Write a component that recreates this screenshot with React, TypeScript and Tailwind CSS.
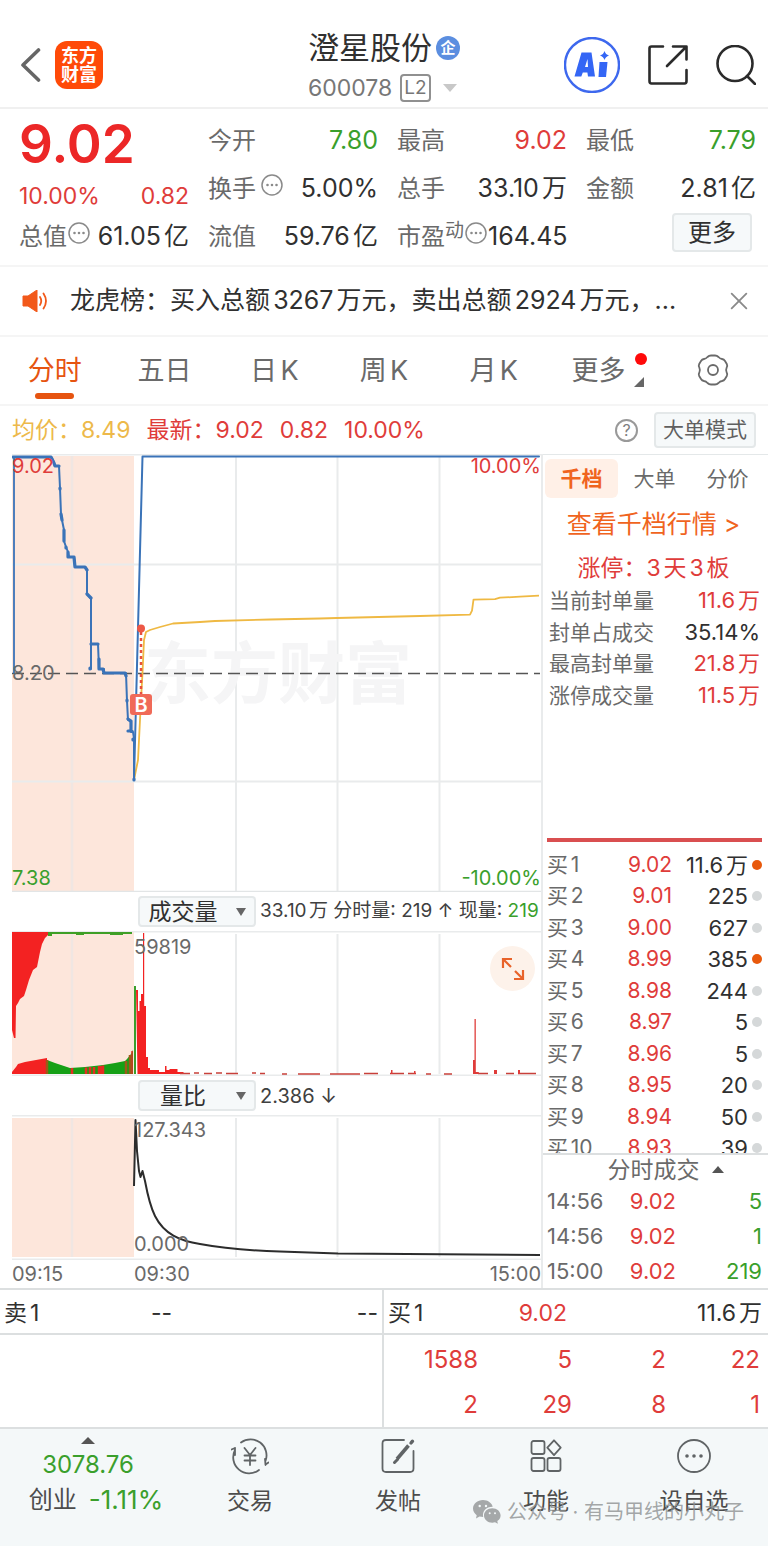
import React from 'react';
import clsx from 'clsx';
import { X } from 'lucide-react';

const RED = 'text-[#df3c3a]';
const GREEN = 'text-[#3a9f2c]';

const periods = ['分时', '五日', '日K', '周K', '月K'];

const limitStats = [
  { label: '当前封单量', value: '11.6万', red: true },
  { label: '封单占成交', value: '35.14%', red: false },
  { label: '最高封单量', value: '21.8万', red: true },
  { label: '涨停成交量', value: '11.5万', red: true },
];

const bids = [
  { price: '9.02', volume: '11.6万', active: true },
  { price: '9.01', volume: '225', active: false },
  { price: '9.00', volume: '627', active: false },
  { price: '8.99', volume: '385', active: true },
  { price: '8.98', volume: '244', active: false },
  { price: '8.97', volume: '5', active: false },
  { price: '8.96', volume: '5', active: false },
  { price: '8.95', volume: '20', active: false },
  { price: '8.94', volume: '50', active: false },
  { price: '8.93', volume: '39', active: false },
];

const trades = [
  { time: '14:56', price: '9.02', volume: '5' },
  { time: '14:56', price: '9.02', volume: '1' },
  { time: '15:00', price: '9.02', volume: '219' },
];

const queue = ['1588', '5', '2', '22', '2', '29', '8', '1'];

const MoreDots: React.FC = () => (
  <svg viewBox="0 0 24 24" className="h-6 w-6 shrink-0 self-start" fill="none" stroke="#8a8a8a" strokeWidth="1.5">
    <circle cx="12" cy="12" r="10" />
    <path d="M7.5 12h.01M12 12h.01M16.5 12h.01" strokeWidth="2.6" strokeLinecap="round" />
  </svg>
);

const Header: React.FC = () => (
  <header className="grid grid-cols-[1fr_auto_1fr] items-center border-b-2 border-[#f0f0f0] px-3 pt-[26px] pb-[3px]">
    <div className="flex items-center gap-3.5 pl-2">
      <button aria-label="返回">
        <svg viewBox="0 0 21 36" className="h-9 w-[21px]" fill="none" stroke="#666" strokeWidth="3.6" strokeLinecap="round" strokeLinejoin="round">
          <path d="M18.500 3 3 18l15.500 15" />
        </svg>
      </button>
      <div className="grid h-12 w-12 place-content-center rounded-xl bg-[#ff4a08] text-center text-[18px] leading-[19px] font-bold text-white">
        <span>东方</span>
        <span>财富</span>
      </div>
    </div>

    <div className="pt-0.5">
      <div className="flex items-center gap-1">
        <h1 className="text-[31px] leading-10 text-[#303030]">澄星股份</h1>
        <span className="grid h-6 w-6 place-content-center rounded-full bg-[#5b8ee0] text-[15px] font-bold text-white">企</span>
      </div>
      <div className="flex h-9 items-center gap-2 pt-1 text-[#777]">
        <span className="text-[23px]">600078</span>
        <span className="rounded-sm border-2 border-[#909090] px-0.5 text-[19px] leading-6">L2</span>
        <svg viewBox="0 0 14 8" className="ml-1 h-2 w-3.5" fill="#c8c8c8">
          <path d="M0 0h14L7 8z" />
        </svg>
      </div>
    </div>

    <div className="flex items-center justify-end gap-7">
      <button aria-label="AI助手">
        <svg viewBox="0 0 56 56" className="h-14 w-14">
          <circle cx="28" cy="28" r="27" fill="none" stroke="#3d68ee" strokeWidth="2.4" />
          <path d="M17.500 15.500h10l3.500 24h-7l-.6-4h-4.600l-1.500 4H10.500zM23.500 22l-2.500 8h3z" fill="#3466f5" fillRule="evenodd" />
          <path d="M35.500 25h8l-1.500 15h-7.500z" fill="#3466f5" />
          <path d="M40.500 14q1 3.500 4.500 4.500-3.500 1-4.500 4.500-1-3.500-4.500-4.500 3.500-1 4.500-4.500z" fill="#3466f5" />
        </svg>
      </button>
      <button aria-label="分享">
        <svg viewBox="0 0 40 40" className="h-10 w-10" fill="none" stroke="#2b2b2b" strokeWidth="2.6" strokeLinecap="round" strokeLinejoin="round">
          <path d="M15 1.500H3.500Q1.500 1.500 1.500 3.500v32.500q0 2.500 2 2.500h33q2 0 2-2.500V25M25 1.500h13.500v13M38 2 19 21" />
        </svg>
      </button>
      <button aria-label="搜索">
        <svg viewBox="0 0 40 40" className="h-10 w-10" fill="none" stroke="#2b2b2b" strokeWidth="2.6" strokeLinecap="round">
          <circle cx="19" cy="18.500" r="17.500" />
          <path d="m31 31 8 8" />
        </svg>
      </button>
    </div>
  </header>
);

interface QuoteItemProps {
  label: React.ReactNode;
  value: string;
  color?: string;
}

const QuoteItem: React.FC<QuoteItemProps> = ({ label, value, color = 'text-[#303030]' }) => (
  <div className="flex h-12 items-center justify-between whitespace-nowrap">
    <dt className="flex h-8 items-center text-2xl text-[#6a6a6a]">{label}</dt>
    <dd className={color}>{value}</dd>
  </div>
);

const Quote: React.FC = () => (
  <section className="grid grid-cols-4 gap-x-[19px] border-b-2 border-[#f5f5f5] pt-2 pr-3 pb-1 pl-[19px] text-[25px]">
    <dl>
      <div className="flex h-24 flex-col">
        <dd className="text-[53px] leading-[54px] font-semibold text-[#ec2727]">9.02</dd>
        <dd className={clsx('flex items-center justify-between pt-2 text-[23px]', RED)}>
          <span>10.00%</span>
          <span>0.82</span>
        </dd>
      </div>
      <QuoteItem label={<>总值<MoreDots /></>} value="61.05亿" />
    </dl>
    <dl>
      <QuoteItem label="今开" value="7.80" color={GREEN} />
      <QuoteItem label={<span className="flex gap-1">换手<MoreDots /></span>} value="5.00%" />
      <QuoteItem label="流值" value="59.76亿" />
    </dl>
    <dl>
      <QuoteItem label="最高" value="9.02" color={RED} />
      <QuoteItem label="总手" value="33.10万" />
      <QuoteItem label={<>市盈<small className="self-start text-[19px] leading-5">动</small><MoreDots /></>} value="164.45" />
    </dl>
    <div>
      <dl>
        <QuoteItem label="最低" value="7.79" color={GREEN} />
        <QuoteItem label="金额" value="2.81亿" />
      </dl>
      <div className="flex justify-end pr-1">
        <button className="h-[39px] w-20 rounded-sm border-2 border-[#e4e8e9] bg-[#f6f9fa] text-2xl leading-8 text-[#303030]">更多</button>
      </div>
    </div>
  </section>
);

const News: React.FC = () => (
  <section className="flex h-[70px] items-center border-b-2 border-[#f5f5f5] pr-[18px] pl-[22px] text-[#303030]">
    <svg viewBox="0 0 26 22" className="h-[22px] w-[26px] shrink-0">
      <path d="M1 6h5L15 0v22L6 16H1z" fill="#f2591a" stroke="#f2591a" strokeLinejoin="round" />
      <path d="M18 7q2.500 4 0 8M21.500 3.500q5 7.500 0 15" fill="none" stroke="#f2591a" strokeWidth="1.8" strokeLinecap="round" />
    </svg>
    <a href="#news" className="ml-[22px] min-w-0 truncate text-[25px]">龙虎榜：买入总额3267万元，卖出总额2924万元，...</a>
    <button aria-label="关闭" className="ml-auto text-[#8a8a8a]">
      <X className="h-[22px] w-[22px]" viewBox="3 3 18 18" strokeWidth={1.5} />
    </button>
  </section>
);

const PeriodTabs: React.FC = () => (
  <nav className="grid h-[69px] grid-cols-7 border-b-2 border-[#f5f5f5] text-[27px] text-[#6a6a6a]">
    {periods.map((name, i) => (
      <button key={name} className={clsx('flex flex-col items-center pt-3.5', i === 0 && 'text-[#e65410]')}>
        <span className="leading-10">{name}</span>
        {i === 0 && <span className="mt-0.5 h-1.5 w-[39px] rounded-sm bg-[#e65410]" />}
      </button>
    ))}
    <button className="flex items-start justify-center pt-3.5 pr-2.5">
      <span className="relative leading-10">
        更多
        <span className="absolute top-0.5 -right-[22px] h-3 w-3 rounded-full bg-[#ff0a0a]" />
        <svg viewBox="0 0 9 9" className="absolute right-[-19px] bottom-1 h-2.5 w-2.5" fill="#666">
          <path d="M9 0v9H0z" />
        </svg>
      </span>
    </button>
    <button aria-label="设置" className="flex justify-center pt-[17px]">
      <svg viewBox="0 0 32 32" className="h-8 w-8" fill="none" stroke="#6a6a6a" strokeWidth="1.8" strokeLinejoin="round">
        <path d="M10.500 3Q12 1.500 14 1.500h4Q20 1.500 21.500 3 23 4.800 25 5q2 .3 3 2l1.800 3q1 2-.2 3.800Q28.600 16 29.600 18.200q1.200 1.800.2 3.800L28 25q-1 1.700-3 2-2 .2-3.500 2Q20 30.500 18 30.500h-4q-2 0-3.500-1.500Q9 27.200 7 27q-2-.3-3-2l-1.800-3q-1-2 .2-3.800Q3.400 16 2.400 13.800 1.200 12 2.200 10L4 7q1-1.700 3-2 2-.2 3.500-2z" />
        <circle cx="16" cy="16" r="5" />
      </svg>
    </button>
  </nav>
);

const PriceBar: React.FC = () => (
  <section className="flex h-12 items-center px-3 text-[23px]">
    <span className="text-[#edb94a]">均价：8.49</span>
    <span className={clsx('ml-4 flex gap-4', RED)}>
      <span>最新：9.02</span>
      <span>0.82</span>
      <span>10.00%</span>
    </span>
    <button aria-label="帮助" className="ml-auto grid h-[23px] w-[23px] place-content-center rounded-full border-2 border-[#999] text-base text-[#808080]">?</button>
    <button className="ml-4 h-9 rounded-sm border-2 border-[#e4e8e9] bg-[#f6f9fa] px-[7px] text-[21px] leading-7 text-[#606060]">大单模式</button>
  </section>
);

const AuctionShade: React.FC<{ top: number; height: number }> = ({ top, height }) => (
  <>
    <rect x="0" y={top} width="122" height={height} fill="#fde6db" />
    <path d={`M60 ${top}v${height}`} stroke="#f0e6e2" strokeWidth="2.500" />
  </>
);

const PriceChart: React.FC = () => (
  <div className="relative text-xl leading-5">
    <svg viewBox="0 0 529 438" className="block w-full">
      <AuctionShade top={2} height={435} />
      <g stroke="#e9ebec" strokeWidth="2" fill="none">
        <path d="M0 .5h529M0 110.500h529M0 327.500h529" />
        <path d="M224 2v435M325.500 2v435M427.500 2v435" />
      </g>
      <text x="266" y="244" textAnchor="middle" fontSize="67" fontWeight="700" fill="#f5f5f6">东方财富</text>
      <path d="M0 219.500h528" stroke="#555" strokeWidth="1.300" strokeDasharray="12 6" />
      <path
        d="M122 326l4-20 3-60 1.500-27 1.500-33 2-8 4-2 10-3 13-3.500 27-1.500 15-1 55-1.500 50-1 17-.5 83-2 50-1.300 2-4 1.500-11 21.500-.500 5-1.500 20-1 19-1"
        fill="none"
        stroke="#efb943"
        strokeWidth="1.800"
        strokeLinejoin="round"
      />
      <g fill="none" stroke="#3a73b8" strokeLinejoin="round" strokeLinecap="round">
        <path d="M2 219V3" strokeWidth="1.800" />
        <path
          d="M1 3H39L41 6 43 12H47L48 34 49 60 50 66 52 76V87L54 93 56 98 57 103H62L63 113H73L75 116V140L79 145V215V190H86L87 215H92V219H114L115 247 116 266 119 268V278H121L122 284V326"
          strokeWidth="2"
        />
        <path
          d="M1 3H39L42 9 43 12H47M48 34v1M49 60l1 6M52 76v11M54 93v1M56 98v5h6l1 10h10l2 3M75 140l4 4M78 214v1M79 190h7M87 205v10h4l1 4h21l1 3M115 246v1M116 265l3 2v10h-3h4M121 285v1M122 325v1"
          strokeWidth="3.200"
        />
        <path d="M122 326 130.500 2.500H527" strokeWidth="2" />
      </g>
      <path d="M129 178v64" stroke="#e8503e" strokeWidth="2.500" strokeDasharray="3 3" />
      <circle cx="129" cy="174.500" r="4" fill="#ed5846" />
      <rect x="118" y="240" width="22" height="21" rx="3" fill="#f06a58" />
      <text x="129" y="258" textAnchor="middle" fontSize="20" fontWeight="600" fill="#fff">B</text>
      <path d="M0 437.500h529" stroke="#e2e5e6" strokeWidth="1.500" />
    </svg>
    <span className={clsx('absolute top-0.5 left-0', RED)}>9.02</span>
    <span className={clsx('absolute top-0.5 right-0', RED)}>10.00%</span>
    <span className="absolute top-1/2 left-0 -translate-y-1/2 text-[#6a6a6a]">8.20</span>
    <span className={clsx('absolute bottom-1 left-0', GREEN)}>7.38</span>
    <span className={clsx('absolute right-0 bottom-1', GREEN)}>-10.00%</span>
  </div>
);

interface IndicatorBarProps {
  options: string[];
  children: React.ReactNode;
}

const IndicatorBar: React.FC<IndicatorBarProps> = ({ options, children }) => (
  <div className="flex h-[39px] items-center gap-1 pl-[126px] text-[#404040]">
    <div className="relative shrink-0">
      <select
        aria-label="指标"
        className="h-[31px] w-[118px] appearance-none rounded-sm border-2 border-[#e4e8e9] bg-[#f6f9fa] pr-7 text-center text-[23px] leading-6 text-[#303030] [text-align-last:center]"
      >
        {options.map((name) => (
          <option key={name}>{name}</option>
        ))}
      </select>
      <svg viewBox="0 0 10 8" className="pointer-events-none absolute top-3 right-2.5 h-2 w-2.5" fill="#666">
        <path d="M0 0h10L5 8z" />
      </svg>
    </div>
    {children}
  </div>
);

const VolumeChart: React.FC = () => (
  <div className="relative text-xl leading-5">
    <svg viewBox="0 0 529 145" className="block w-full">
      <AuctionShade top={1} height={142} />
      <path d="M224 3v140M325.500 3v140M427.500 3v140M0 .5h529M0 144.500h529" stroke="#e9ebec" strokeWidth="2" />
      <path d="M0 1h36v3l-3 3-3 6-2 8-2 10-1 5-4 3-2 5-2 5-3 10-2 6-4 3-2 4-2 3-.5 32H2L0 99z" fill="#f32222" />
      <path d="M36 1h84v2h-9v1H98V3H72v1h-8V3H40v2h-4z" fill="#3f9f26" />
      <path d="M0 143v-2l4-5 2-3 7-2 11-2 11-2v16z" fill="#f32222" />
      <path d="M35 129l8 3 15 5 15-1 18-2 12-2 10-2 2-2 4-5 2-4v24H35z" fill="#16a016" />
      <path d="M60 137v6M74 136.500v6.500M78 136v7M82 136v7M87 135v8M89 135v8M91 134.500v8.500" stroke="#e52d22" strokeWidth="2.500" />
      <path d="M35 129v14M114 130v13M118 124v19" stroke="#9c5a18" strokeWidth="2.500" />
      <path d="M120 120v23" stroke="#e52d22" strokeWidth="1.500" />
      <path d="M123 55v88" stroke="#3a9f2c" strokeWidth="2" />
      <path d="M124 59h2v21h1.500V70h1.500v-7h2V2h1.200v73h1.800v51h2v11h2v2h9v2h6v-6h1.500v4h3v-1h8v3h6v2h-46z" fill="#f32222" />
      <path
        d="M168 142.500h10M182 142h5M192 142.500h8M204 142h6M214 142.500h12M240 142h4M248 142.500h5M270 143h5M286 143h22M318 143h30M352 142.500h14M378 142.500h14M396 142.500h8M414 143h5M432 143h8M466 142.500h10M494 142.500h8M506 142.500h18"
        stroke="#c8403a"
        strokeWidth="1.500"
      />
      <path d="M461 129h1.500V88h1.300v53h3v2H461zM482 139h3v4h-3zM506 139h2v4h-2zM379 139h1.500v4H379zM402 140h1.500v3H402z" fill="#df3c3a" />
    </svg>
    <span className="absolute top-1.5 left-[122px] text-[#6a6a6a]">59819</span>
    <button aria-label="全屏" className="absolute top-[15px] right-[6px] grid h-[45px] w-[45px] place-content-center rounded-full bg-[#fdf2ea]">
      <svg viewBox="0 0 24 24" className="h-6 w-6" fill="none" stroke="#e8632a" strokeWidth="2.200">
        <path d="M2 11V2h9M2 2l8 8M22 13v9h-9M22 22l-8-8" />
      </svg>
    </button>
  </div>
);

const RatioChart: React.FC = () => (
  <div className="relative text-xl leading-5 text-[#6a6a6a]">
    <svg viewBox="0 0 529 145" className="block w-full">
      <AuctionShade top={3} height={139} />
      <path d="M224 3v139M325.500 3v139M427.500 3v139M0 .5h529M0 144.500h529" stroke="#e9ebec" strokeWidth="2" />
      <path
        d="M122 71 123.500 5 125 36 127 56 128.500 62 130.500 56 133 66C136 82 139 93 143 101C152 119 168 126 188 129C212 133.500 238 135.500 268 136.500L326 138.500 528 140"
        fill="none"
        stroke="#2c2c2c"
        strokeWidth="2"
        strokeLinejoin="round"
      />
    </svg>
    <span className="absolute top-[5px] left-[122px]">127.343</span>
    <span className="absolute bottom-1.5 left-[122px]">0.000</span>
  </div>
);

const Charts: React.FC = () => (
  <div className="pl-3">
    <PriceChart />
    <IndicatorBar options={['成交量', '量比']}>
      <span className="text-[19px] whitespace-pre">
        33.10万 分时量: 219 ↑ 现量: <span className={GREEN}>219</span>
      </span>
    </IndicatorBar>
    <VolumeChart />
    <IndicatorBar options={['量比', '成交量']}>
      <span className="text-xl">2.386 ↓</span>
    </IndicatorBar>
    <RatioChart />
    <div className="flex h-7 items-center text-xl text-[#6a6a6a]">
      <span className="w-[122px]">09:15</span>
      <span>09:30</span>
      <span className="ml-auto">15:00</span>
    </div>
  </div>
);

const OrderBook: React.FC = () => (
  <aside className="flex flex-col border-l-2 border-[#e9ebec] text-[21px]">
    <div className="grid grid-cols-3 border-t border-[#e4e8e9] pt-1 pr-1 pl-0.5 text-[#6a6a6a]">
      <button className="h-[39px] rounded-md bg-[#fff0e7] font-bold text-[#f0641e]">千档</button>
      <button>大单</button>
      <button>分价</button>
    </div>
    <a href="#depth" className="pt-2 pr-1 text-center text-[25px] leading-[37px] text-[#f0641e]">查看千档行情 &gt;</a>
    <p className={clsx('pt-2 pr-1 text-center text-[23px] leading-[34px]', RED)}>涨停：3天3板</p>
    <dl className="grid h-[126px] grid-rows-4 pr-2 pl-1.5">
      {limitStats.map((item) => (
        <div key={item.label} className="flex items-center justify-between">
          <dt className="text-[#6a6a6a]">{item.label}</dt>
          <dd className={clsx('text-[22px]', item.red ? RED : 'text-[#303030]')}>{item.value}</dd>
        </div>
      ))}
    </dl>

    <div className="mt-[127px] mr-1.5 ml-1 h-1 bg-[#d94f50]" />
    <div className="mt-[7px] h-[304px] overflow-hidden">
      <table className="h-[315px] w-full table-fixed leading-7">
        <tbody>
          {bids.map((bid, i) => (
            <tr key={bid.price}>
              <td className="w-[56px] p-0 pl-1 text-[#6a6a6a]">买{i + 1}</td>
              <td className={clsx('w-[73px] p-0 text-right', RED)}>{bid.price}</td>
              <td className="p-0 text-right text-[22px] text-[#303030]">{bid.volume}</td>
              <td className="w-5 p-0 pl-1">
                <span className={clsx('block h-2.5 w-2.5 rounded-full', bid.active ? 'bg-[#e8590c]' : 'bg-[#d5d8d9]')} />
              </td>
            </tr>
          ))}
        </tbody>
      </table>
    </div>

    <button className="flex h-[31px] items-center justify-center gap-3 border-t-2 border-[#dcdfe0] pl-5 text-[23px] leading-7 text-[#6a6a6a]">
      分时成交
      <svg viewBox="0 0 12 7" className="h-[7px] w-3" fill="#555">
        <path d="M0 7h12L6 0z" />
      </svg>
    </button>
    <table className="h-[104px] w-full table-fixed text-[22px] leading-7">
      <tbody>
        {trades.map((trade, i) => (
          <tr key={i}>
            <td className="w-[66px] p-0 pl-1 text-[#6a6a6a]">{trade.time}</td>
            <td className={clsx('w-[67px] p-0 text-right', RED)}>{trade.price}</td>
            <td className={clsx('p-0 pr-1.5 text-right', GREEN)}>{trade.volume}</td>
          </tr>
        ))}
      </tbody>
    </table>
  </aside>
);

const Depth: React.FC = () => (
  <section className="grid grid-cols-2 border-y-2 border-[#dcdfe0] text-[23px] text-[#303030]">
    <div className="border-r-2 border-[#dcdfe0]">
      <div className="grid h-[45px] grid-cols-[1fr_80px_1fr] items-center border-b-2 border-[#dcdfe0] px-1 pt-1">
        <span>卖1</span>
        <span>--</span>
        <span className="text-right">--</span>
      </div>
    </div>
    <div>
      <div className="grid h-[45px] grid-cols-3 items-center border-b-2 border-[#dcdfe0] pt-1 pr-1.5 pl-1">
        <span>买1</span>
        <span className={clsx('pl-1.5', RED)}>9.02</span>
        <span className="text-right">11.6万</span>
      </div>
      <div className={clsx('grid grid-cols-4 pt-0.5 pr-2 text-right text-2xl leading-[45px]', RED)}>
        {queue.map((count, i) => (
          <span key={i}>{count}</span>
        ))}
      </div>
    </div>
  </section>
);

const NavItem: React.FC<{ label: string; children: React.ReactNode }> = ({ label, children }) => (
  <button className="flex flex-col items-center pt-2">
    <svg viewBox="0 0 38 38" className="h-[38px] w-[38px]" fill="none" stroke="#606466" strokeWidth="1.800" strokeLinecap="round" strokeLinejoin="round">
      {children}
    </svg>
    <span className="pt-2 text-[23px] leading-9">{label}</span>
  </button>
);

const BottomNav: React.FC = () => (
  <nav className="relative grid grid-cols-[176fr_148fr_148fr_148fr_148fr] items-start bg-[#f4f8f9] pb-7 text-[#4c4c4c]">
    <button className="flex flex-col items-center pt-2 text-2xl">
      <svg viewBox="0 0 14 7" className="h-[7px] w-3.5" fill="#555">
        <path d="M0 7h14L7 0z" />
      </svg>
      <span className={clsx('pt-1 leading-[34px]', GREEN)}>3078.76</span>
      <span className="flex gap-3 pl-4 leading-9 whitespace-nowrap">
        创业<span className={clsx('text-[26px]', GREEN)}>-1.11%</span>
      </span>
    </button>
    <NavItem label="交易">
      <path d="M10 5.500A16 16 0 0 1 34.500 24M34.500 28l-.5-6M34.500 27.500l3-2M28 33A16 16 0 0 1 4 13M4 11v7M4 11l-3.500 1.500" />
      <path d="M13.500 11 19 18l5.500-7M19 18v10M13.500 18.500h11M13.500 23.500h11" />
    </NavItem>
    <NavItem label="发帖">
      <path d="M25 3H7Q3.500 3 3.500 6.500v25Q3.500 35 7 35h24q3.500 0 3.500-3.500V14" />
      <path d="M18 22 29.500 8.500" strokeWidth="3.600" strokeLinecap="butt" />
      <path d="m15.500 25.500 3-3" strokeWidth="3" />
      <path d="m32 6 1.500-1.800" strokeWidth="3.400" />
    </NavItem>
    <NavItem label="功能">
      <rect x="4.500" y="4" width="13" height="13" rx="2" />
      <rect x="4.500" y="21" width="13" height="13" rx="2" />
      <rect x="20.500" y="21" width="13" height="13" rx="2" />
      <path d="m27 3.300 6.700 7.400-6.700 7.400-6.700-7.400z" />
    </NavItem>
    <NavItem label="设自选">
      <circle cx="19" cy="19" r="16" />
      <path d="M12 19h.01M19 19h.01M26 19h.01" strokeWidth="3.600" />
    </NavItem>

    <div className="pointer-events-none absolute top-[69px] right-6 flex items-center gap-1.5 text-xl text-[#8d9091]/80">
      <svg viewBox="0 0 28 24" className="h-6 w-7" fill="#a5a8a9">
        <path d="M10 0C4.500 0 0 3.800 0 8.600c0 2.700 1.500 5 3.700 6.600L3 18.500l3.500-2 3.700.6C9 11 13 6.700 19.700 6.700 18.800 2.900 14.800 0 10 0z" />
        <path d="M19.300 8.300c-4.700 0-8.300 3.200-8.300 7.200s3.600 7.200 8.300 7.200l2.700-.4 2.900 1.500-.6-2.700c2-1.300 3.300-3.300 3.300-5.600 0-4-3.700-7.200-8.300-7.200z" />
        <g fill="#f4f8f9">
          <circle cx="6.700" cy="6" r="1.200" />
          <circle cx="13" cy="6" r="1.200" />
          <circle cx="16.700" cy="13.300" r="1" />
          <circle cx="22" cy="13.300" r="1" />
        </g>
      </svg>
      <span>公众号 · 有马甲线的小丸子</span>
    </div>
  </nav>
);

const App: React.FC = () => {
  return (
    <div className="bg-white font-['Inter','Noto_Sans_CJK_SC',sans-serif] [text-autospace:normal]">
      <Header />
      <Quote />
      <News />
      <PeriodTabs />
      <PriceBar />
      <main className="grid grid-cols-[541fr_227fr]">
        <Charts />
        <OrderBook />
      </main>
      <Depth />
      <BottomNav />
    </div>
  );
};

export default App;
